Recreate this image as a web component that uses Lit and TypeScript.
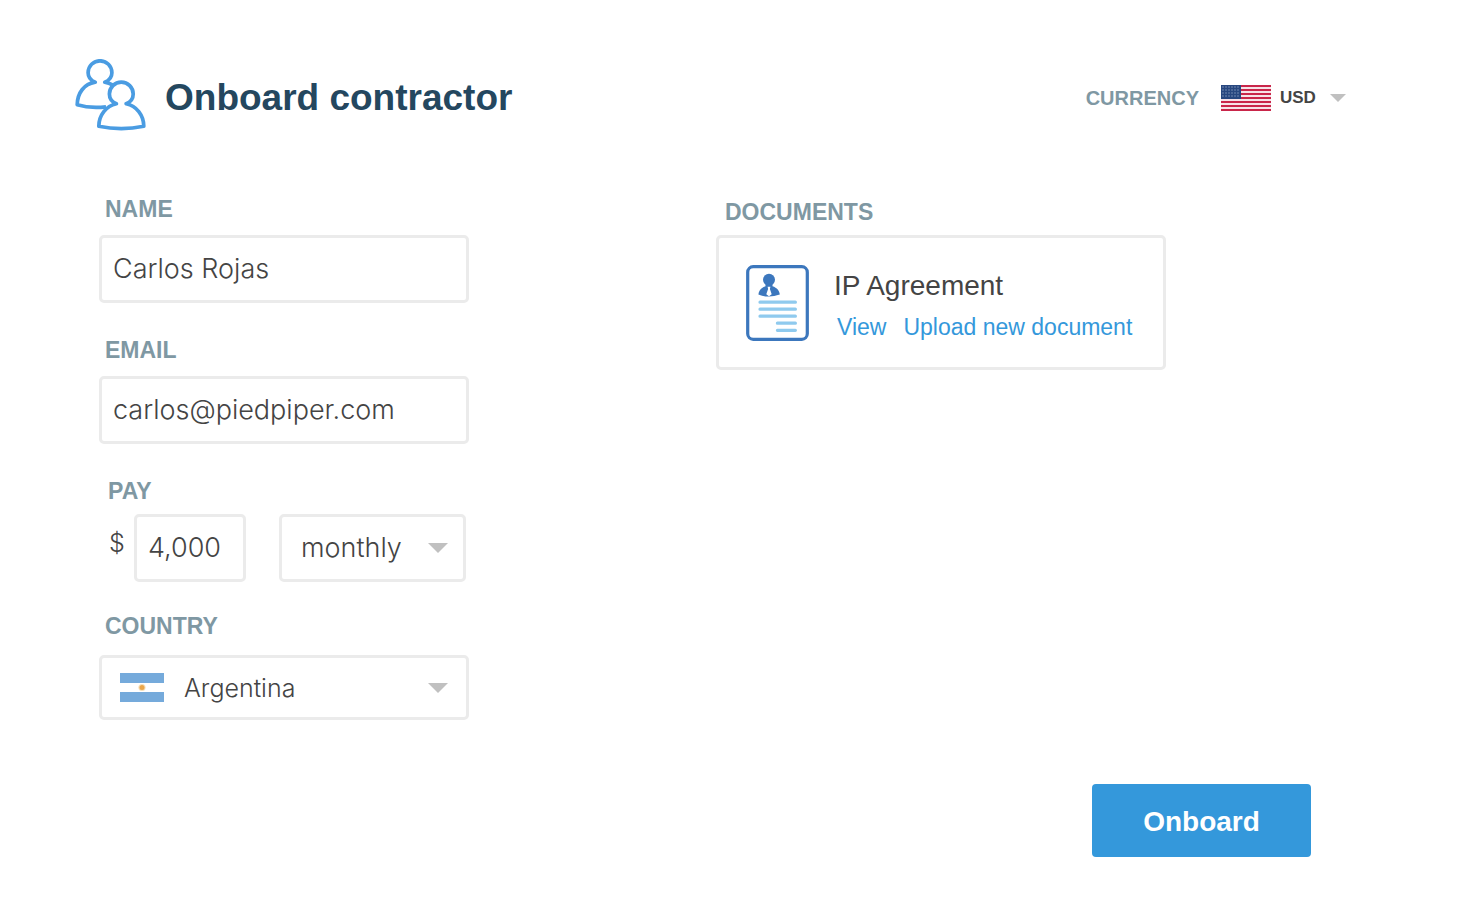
import { LitElement, html, css, svg } from "lit";
import { customElement, property, state } from "lit/decorators.js";

const usersIcon = html`
  <svg class="users" viewBox="0 0 71 72" aria-hidden="true">
    <g fill="none" stroke="#4a9ce2" stroke-width="3.7" stroke-linejoin="round">
      <path d="M37.4 25.8 Q34 24 29.8 23.2 C34.2 21.4 36.9 18 36.9 13.7 A11.9 11.9 0 1 0 13.1 13.7 C13.1 18 15.8 21.4 20.2 23.2 C9 25 2.4 34 2.2 45.8 Q15 49.6 31 47.8"/>
      <path d="M41.4 44.8 C37 43 34.4 39.5 34.4 35 A11.9 11.9 0 1 1 58.2 35 C58.2 39.5 55.6 43 51.2 44.8 C61.5 47 68.6 56 68.8 67.2 Q46.3 72 23.8 67.2 C24 56 31.1 47 41.4 44.8 Z"/>
    </g>
  </svg>
`;

const documentIcon = html`
  <svg class="document" viewBox="0 0 63 76" aria-hidden="true">
    <rect x="1.7" y="1.7" width="59.6" height="72.6" rx="5.5" fill="#fff" stroke="#3c77bd" stroke-width="3.2"/>
    <circle cx="23" cy="14.8" r="6" fill="#3c77bd"/>
    <path fill="#3c77bd" d="M19.5 18 h7 v3.2 C31 22.6 33.6 26 33.8 29.6 Q28 31.6 23 31.6 Q18 31.6 12.4 29.6 C12.6 26 15.2 22.6 19.5 21.2 Z"/>
    <path fill="#fff" d="M21.6 21.8 h2.8 l-.5 2.2 1.8 5.2 -2.7 2 -2.7 -2 1.8 -5.2 Z"/>
    <path stroke="#8fcaee" stroke-width="3.2" stroke-linecap="round" fill="none"
      d="M14 37.2 H49.4 M14 44.2 H49.4 M14 51.2 H49.4 M31.4 58.2 H49.4 M31.4 65.3 H49.4"/>
  </svg>
`;

const stripes = Array.from({ length: 7 }, (_, i) => i * 4);
const starColumns = [2, 5, 8, 11, 14, 17];
const starRows = [2, 5, 8, 11];

const usFlag = html`
  <svg class="flag-us" viewBox="0 0 50 26" aria-hidden="true">
    <rect width="50" height="26" fill="#f7e3e8"/>
    ${stripes.map((y) => svg`<rect y=${y} width="50" height="2" fill="#c9264a"/>`)}
    <rect width="20" height="14" fill="#28477f"/>
    ${starRows.map((y) => starColumns.map((x) => svg`<circle cx=${x} cy=${y} r=".7" fill="#8da0c2"/>`))}
  </svg>
`;

const argentinaFlag = html`
  <svg class="flag-ar" viewBox="0 0 44 29" aria-hidden="true">
    <rect width="44" height="29" fill="#fff"/>
    <rect width="44" height="10" fill="#75aadb"/>
    <rect y="19" width="44" height="10" fill="#75aadb"/>
    <circle cx="22" cy="14.5" r="3.6" fill="#f6dfb8"/>
    <circle cx="22" cy="14.5" r="2.5" fill="#eaa64a"/>
  </svg>
`;

const caret = html`
  <svg class="caret" viewBox="0 0 20 10" aria-hidden="true"><path d="M0 0 H20 L10 10 Z" fill="#c0c0c0"/></svg>
`;

@customElement("document-card")
export class DocumentCard extends LitElement {
  @property() name = "";

  static styles = css`
    :host {
      display: flex;
      gap: 25px;
      box-sizing: border-box;
      max-width: 450px;
      padding: 27px 27px 26px;
      border: 3px solid #ebebeb;
      border-radius: 5px;
    }
    .document {
      flex: none;
      width: 63px;
      height: 76px;
    }
    .name {
      margin: 0 0 6px;
      font-size: 28px;
      font-weight: 400;
      line-height: 42px;
      color: #444;
    }
    .links {
      display: flex;
      gap: 17px;
      padding-left: 3px;
      font-size: 23px;
      line-height: 28px;
      white-space: nowrap;
    }
    .link {
      color: #3498db;
      text-decoration: none;
    }
  `;

  render() {
    return html`
      ${documentIcon}
      <div>
        <h2 class="name">${this.name}</h2>
        <div class="links">
          <a class="link" href="#view">View</a>
          <a class="link" href="#upload">Upload new document</a>
        </div>
      </div>
    `;
  }
}

@customElement("app-root")
export class AppRoot extends LitElement {
  @state() private name = "Carlos Rojas";
  @state() private email = "carlos@piedpiper.com";
  @state() private amount = "4,000";

  static styles = css`
    :host {
      display: block;
      min-height: 100vh;
      box-sizing: border-box;
      padding: 59px 0;
      background: #fff;
      color: #444;
      font-family: "Liberation Sans", Arial, sans-serif;
    }
    .header {
      display: flex;
      justify-content: space-between;
      align-items: flex-end;
      padding: 0 138px 0 75px;
    }
    .brand {
      display: flex;
      align-items: flex-end;
      gap: 19px;
    }
    .users {
      width: 71px;
      height: 72px;
    }
    .title {
      margin: 0;
      font-size: 37px;
      line-height: 66px;
      color: #24475f;
    }
    .currency {
      display: flex;
      align-items: center;
      height: 66px;
    }
    .currency-label {
      margin-right: 22px;
      font-size: 20px;
      font-weight: 700;
      color: #7f98a3;
    }
    .flag-us {
      width: 50px;
      height: 26px;
      margin-right: 9px;
    }
    .picker {
      display: grid;
      align-items: center;
    }
    .picker > * {
      grid-area: 1 / 1;
    }
    .picker .caret {
      justify-self: end;
      pointer-events: none;
    }
    .picker-currency {
      width: 66px;
    }
    .picker-currency .caret {
      width: 16px;
      height: 8px;
    }
    .picker-currency .select {
      font: 700 17px/24px "Liberation Sans", Arial, sans-serif;
    }
    .select {
      appearance: none;
      width: 100%;
      margin: 0;
      padding: 0;
      border: 0;
      background: none;
      color: #444;
    }
    .form {
      display: grid;
      grid-template-columns: 1fr 1fr;
      padding: 65px 151px 0 99px;
    }
    .fields {
      max-width: 370px;
    }
    .documents {
      padding-top: 3px;
    }
    .label {
      display: block;
      margin-bottom: 13px;
      padding-left: 6px;
      font-size: 23px;
      font-weight: 700;
      line-height: 26px;
      color: #7f98a3;
    }
    .label-tight {
      margin-bottom: 10px;
      padding-left: 9px;
    }
    .label-loose {
      margin-bottom: 16px;
    }
    .group {
      margin-bottom: 34px;
    }
    .group-pay {
      margin-bottom: 31px;
    }
    .box {
      box-sizing: border-box;
      width: 100%;
      height: 68px;
      border: 3px solid #ebebeb;
      border-radius: 5px;
      background: #fff;
      color: #444;
      font: 300 27px/32px Inter, "Liberation Sans", sans-serif;
    }
    .input {
      display: block;
      margin: 0;
      padding: 0 11px 2px;
    }
    .pay {
      display: grid;
      grid-template-columns: 25px 112px 1fr;
      padding-left: 10px;
    }
    .dollar {
      font: 300 25px/58px Inter, "Liberation Sans", sans-serif;
    }
    .picker-box .select {
      padding: 0 48px 0 19px;
    }
    .picker-box .caret {
      width: 20px;
      height: 10px;
      margin-right: 18px;
    }
    .period {
      margin: 0 3px 0 33px;
    }
    .picker-country .select {
      height: 65px;
      padding-left: 82px;
      font-size: 25px;
    }
    .picker-country .caret {
      margin-right: 21px;
    }
    .flag-ar {
      width: 44px;
      height: 29px;
      margin-left: 21px;
      pointer-events: none;
    }
    .actions {
      display: flex;
      justify-content: flex-end;
      padding: 30px 173px 0 0;
    }
    .submit {
      width: 219px;
      height: 73px;
      padding: 3px 0 0;
      border: 0;
      border-radius: 4px;
      background: #3498db;
      color: #fff;
      font: 700 28px/32px "Liberation Sans", Arial, sans-serif;
    }
  `;

  render() {
    return html`
      <header class="header">
        <div class="brand">
          ${usersIcon}
          <h1 class="title">Onboard contractor</h1>
        </div>
        <div class="currency">
          <label class="currency-label" for="currency">CURRENCY</label>
          ${usFlag}
          <div class="picker picker-currency">
            <select class="select" id="currency"><option>USD</option></select>
            ${caret}
          </div>
        </div>
      </header>
      <main>
        <div class="form">
          <div class="fields">
            <div class="group">
              <label class="label" for="name">NAME</label>
              <input class="box input" id="name" type="text" .value=${this.name}
                @input=${(e: Event) => (this.name = (e.target as HTMLInputElement).value)} />
            </div>
            <div class="group">
              <label class="label" for="email">EMAIL</label>
              <input class="box input" id="email" type="email" .value=${this.email}
                @input=${(e: Event) => (this.email = (e.target as HTMLInputElement).value)} />
            </div>
            <div class="group group-pay">
              <label class="label label-tight" for="amount">PAY</label>
              <div class="pay">
                <span class="dollar">$</span>
                <input class="box input" id="amount" type="text" inputmode="decimal" .value=${this.amount}
                  @input=${(e: Event) => (this.amount = (e.target as HTMLInputElement).value)} />
                <div class="picker picker-box period">
                  <select class="box select" aria-label="Pay period"><option>monthly</option></select>
                  ${caret}
                </div>
              </div>
            </div>
            <div class="group">
              <label class="label label-loose" for="country">COUNTRY</label>
              <div class="picker picker-box picker-country">
                <select class="box select" id="country"><option>Argentina</option></select>
                ${argentinaFlag} ${caret}
              </div>
            </div>
          </div>
          <section class="documents">
            <div class="label label-tight">DOCUMENTS</div>
            <document-card name="IP Agreement"></document-card>
          </section>
        </div>
        <div class="actions">
          <button class="submit" type="submit">Onboard</button>
        </div>
      </main>
    `;
  }
}
